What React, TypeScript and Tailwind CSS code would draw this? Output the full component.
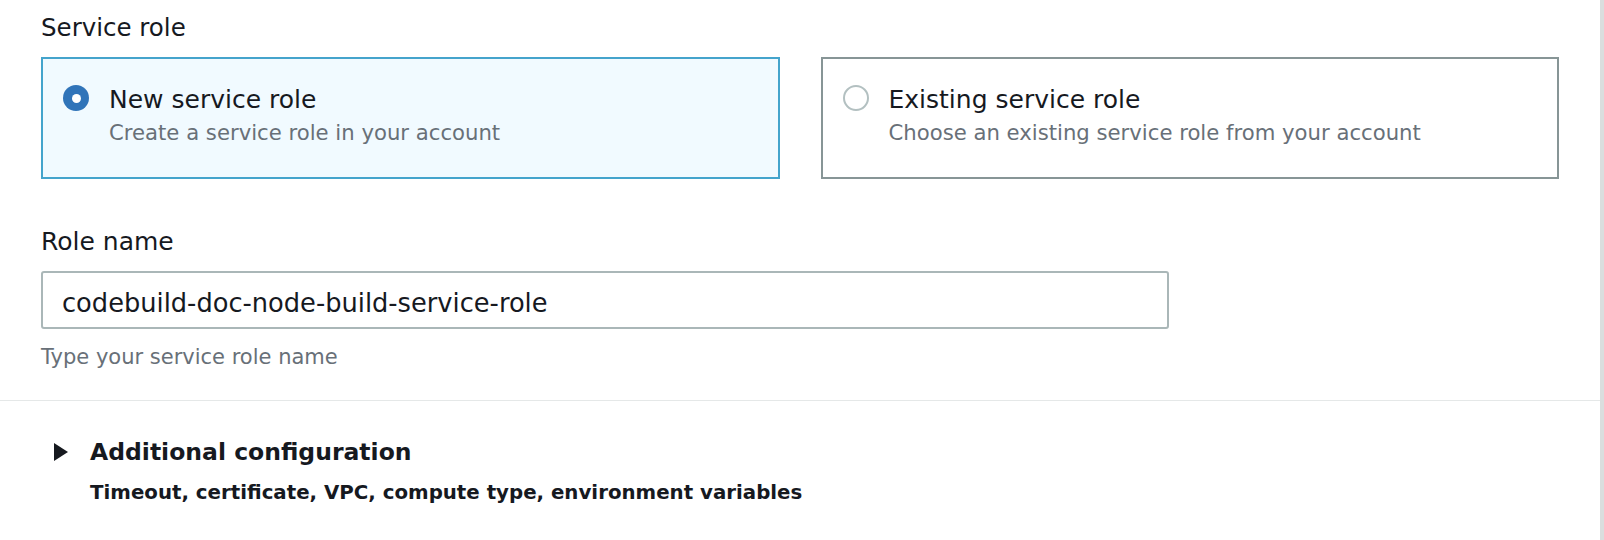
import { useState } from 'react';

type RoleOption = 'new' | 'existing';

interface TileProps {
    selected: boolean;
    title: string;
    description: string;
    onSelect: () => void;
}

function RadioTile({ selected, title, description, onSelect }: TileProps) {
    return (
        <button
            type="button"
            onClick={onSelect}
            className={`flex h-[122px] items-start border-2 pl-[20px] pt-[26px] text-left ${
                selected ? 'border-[#44a4cc] bg-[#f1faff]' : 'border-[#879596] bg-white'
            }`}
        >
            {selected ? (
                <span className="flex h-[26px] w-[26px] shrink-0 items-center justify-center rounded-full bg-[#3074b9]">
                    <span className="h-[9px] w-[9px] rounded-full bg-white" />
                </span>
            ) : (
                <span className="h-[26px] w-[26px] shrink-0 rounded-full border-2 border-[#b3c0c1] bg-white" />
            )}
            <span className="ml-[20px] flex flex-col">
                <span className="text-[25px] leading-[30px] text-[#16191f]">{title}</span>
                <span className="mt-[5px] text-[21.2px] leading-[26px] text-[#687078]">{description}</span>
            </span>
        </button>
    );
}

export default function App() {
    const [role, setRole] = useState<RoleOption>('new');
    const [roleName, setRoleName] = useState('codebuild-doc-node-build-service-role');

    return (
        <div className="h-[540px] w-[1604px] border-r-4 border-[#dadede] bg-white font-['DejaVu_Sans',sans-serif]">
            <div className="px-[41px] pt-[12px] pb-[30px]">
                <div className="text-[24.5px] leading-8 text-[#16191f]">Service role</div>
                <div className="mt-[13px] grid grid-cols-2 gap-[41px]">
                    <RadioTile
                        selected={role === 'new'}
                        title="New service role"
                        description="Create a service role in your account"
                        onSelect={() => setRole('new')}
                    />
                    <RadioTile
                        selected={role === 'existing'}
                        title="Existing service role"
                        description="Choose an existing service role from your account"
                        onSelect={() => setRole('existing')}
                    />
                </div>

                <div className="mt-[47px] text-[25px] leading-8 text-[#16191f]">Role name</div>
                <input
                    value={roleName}
                    onChange={(e) => setRoleName(e.target.value)}
                    className="mt-[13px] block h-[58px] w-[1128px] rounded-[3px] border-2 border-[#aab7b8] px-[19px] pt-[6px] text-[25.7px] text-[#16191f] outline-none"
                />
                <div className="mt-[15px] text-[21px] leading-[26px] text-[#687078]">Type your service role name</div>
            </div>

            <div className="border-t border-[#e5e8e8] pl-[54px] pt-[35px]">
                <div className="flex items-center">
                    <svg width="14" height="18" viewBox="0 0 14 18" className="mr-[22px] shrink-0">
                        <polygon points="0,0 14,9 0,18" fill="#16191f" />
                    </svg>
                    <span className="text-[23.5px] leading-8 font-bold text-[#16191f]">Additional configuration</span>
                </div>
                <div className="mt-[12px] pl-[36px] text-[19.8px] leading-[26px] font-bold text-[#16191f]">
                    Timeout, certificate, VPC, compute type, environment variables
                </div>
            </div>
        </div>
    );
}
